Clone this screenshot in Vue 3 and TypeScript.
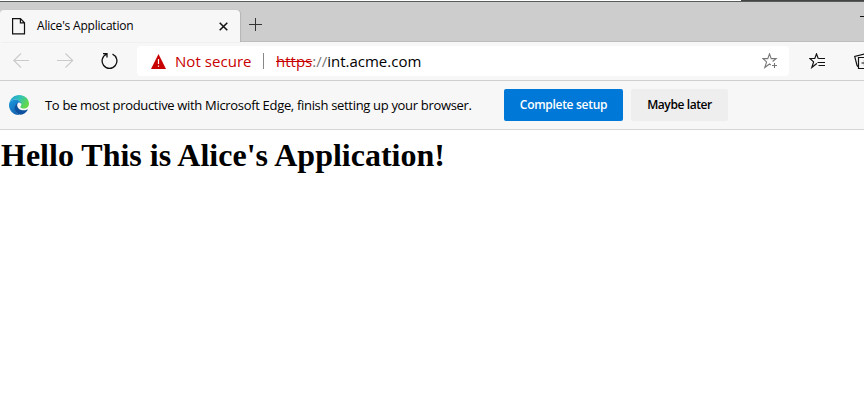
<script setup lang="ts">
interface PageInfo {
  title: string
  scheme: string
  host: string
  heading: string
}

const page: PageInfo = {
  title: "Alice's Application",
  scheme: 'https',
  host: 'int.acme.com',
  heading: "Hello This is Alice's Application!",
}
</script>

<template>
  <div class="browser">
    <header class="tabstrip">
      <div class="tab">
        <svg class="file" width="14" height="17" viewBox="0 0 14 17" fill="none" stroke="#111" stroke-width="1.2">
          <path d="M.6.6h7.8l4.1 4.2v11H.6zM8.400.6v4.200h4.100" />
        </svg>
        <span class="tab-title">{{ page.title }}</span>
        <svg class="close" width="9" height="9" viewBox="0 0 9 9" stroke="#111" stroke-width="1.5">
          <path d="M.7.7l7.6 7.6M8.3.7L.7 8.3" />
        </svg>
      </div>
      <svg class="plus" width="13" height="13" viewBox="0 0 13 13" stroke="#333" stroke-width="1">
        <path d="M6.5 0v13M0 6.5h13" />
      </svg>
      <span class="minimize"></span>
    </header>

    <nav class="toolbar">
      <svg class="back" width="17" height="16" viewBox="0 0 17 16" fill="none" stroke="#cacaca" stroke-width="1.1">
        <path d="M16 7.500H1M8 .500L.8 7.500 8 14.500" />
      </svg>
      <svg class="forward" width="17" height="16" viewBox="0 0 17 16" fill="none" stroke="#cacaca" stroke-width="1.1">
        <path d="M0 7.500h15.500M8.500 .500l7.200 7L8.500 14.500" />
      </svg>
      <svg class="reload" width="17" height="18" viewBox="0 0 17 18" fill="none" stroke="#111" stroke-width="1.3">
        <path d="M11.500 2.200A7.400 7.400 0 1 1 5.500 2.200M2 1.600h4v4" />
      </svg>
      <div class="address">
        <svg class="warning" width="15" height="15" viewBox="0 0 15 15">
          <path d="M7.500 0L15 15H0z" fill="#c80000" />
          <path d="M7.500 5v5M7.500 11.500v1.300" stroke="#fff" stroke-width="1.200" />
        </svg>
        <span class="insecure">Not secure</span>
        <span class="divider"></span>
        <span class="url"><s>{{ page.scheme }}</s><i>://</i>{{ page.host }}</span>
        <svg class="star-add" width="16" height="16" viewBox="0 0 16 16" fill="none" stroke="#777" stroke-width="1.1">
          <path d="M8.800 12l-1.300-1-4.700 3.500 1.800-5.600L.9 5.600h4.900L7.500.9l1.700 4.700h4.900l-3.500 2.900M12.500 10v5M10 12.500h5" />
        </svg>
      </div>
      <svg class="favorites" width="17" height="16" viewBox="0 0 17 16" fill="none" stroke="#111" stroke-width="1.200">
        <path d="M8 11l-.5-.2-4.700 3.700 1.800-5.600L.9 5.500h4.900L7.500.9l1.700 4.600" />
        <path d="M9.200 5.500h6.800M8.500 9.500h7.500M9.500 12.500h6.500" stroke-width="1" />
      </svg>
      <svg class="collections" width="18" height="17" viewBox="0 0 18 17" fill="none" stroke="#111" stroke-width="1.200">
        <path d="M4 13.500l-1-1L.7 3.400 11.500.8l.7 2.700M4.500 4.500h12v11h-12zM10.500 7v6M7.500 10h6" />
      </svg>
    </nav>

    <section class="infobar">
      <svg class="edge" width="20" height="20" viewBox="0 0 20 20">
        <defs>
          <linearGradient id="crest" x1="0" y1="0" x2="1" y2=".5">
            <stop offset="0" stop-color="#2494d8" />
            <stop offset=".5" stop-color="#2fc2b8" />
            <stop offset="1" stop-color="#65d848" />
          </linearGradient>
          <linearGradient id="wave" x1="0" y1="0" x2=".6" y2="1">
            <stop offset="0" stop-color="#1b9ce0" />
            <stop offset="1" stop-color="#1360b0" />
          </linearGradient>
        </defs>
        <path d="M.3 8.500C1.200 3.500 5.200 0 10 0c5.700 0 10 4 10 8.600 0 3-2.200 5-5 5-2.400 0-3.700-.9-3.700-1.600 0-.5 1-1.100 1-2.500C12.300 6.800 9.500 4.500 6 4.500 3.500 4.500 1.400 6 .3 8.500z" fill="url(#crest)" />
        <path d="M0 10c0-3.300 2.700-5.600 6-5.600 3.500 0 6 2.200 6.300 4.600C11.700 8 10.700 7.500 9.500 7.500 7.300 9 6 11 6 13.200c0 3 2 5.500 4.500 6.700C4.500 20.300 0 15.700 0 10z" fill="url(#wave)" />
        <path d="M9.300 7.600C7 8.500 5.700 10.800 5.700 13.200c0 3.500 2.700 6.300 6 6.600 3-.5 5.400-2.200 7-4.800.2-.5-.1-.7-.5-.5-4.700 2.200-10-.1-10-4.500 0-1 .4-1.800 1.100-2.400z" fill="#0c519f" />
      </svg>
      <span class="message">To be most productive with Microsoft Edge, finish setting up your browser.</span>
      <button class="primary"><span>Complete setup</span></button>
      <button class="secondary"><span>Maybe later</span></button>
    </section>

    <main><h1>{{ page.heading }}</h1></main>
  </div>
</template>

<style>
body {
  margin: 0;
  background: #fff;
  overflow: hidden;
}
</style>

<style scoped>
.browser {
  width: 864px;
  height: 416px;
  overflow: hidden;
  font-family: "Open Sans", "Noto Sans", sans-serif;
  color: #000;
  background: #fff;
}
svg, span, button { flex-shrink: 0; }
svg { display: block; }
.tabstrip {
  box-sizing: border-box;
  height: 42px;
  display: flex;
  align-items: flex-start;
  padding-top: 10px;
  background:
    linear-gradient(#444, #444) 741px 0 / 123px 1px no-repeat,
    linear-gradient(#fff, #fff) 0 0 / 741px 1px no-repeat,
    linear-gradient(#555d58, #555d58) 0 1px / 864px 1px no-repeat,
    linear-gradient(#bdbdbd, #bdbdbd) 0 41px / 864px 1px no-repeat,
    #cdcdcd;
}
.tab {
  box-sizing: border-box;
  width: 240px;
  height: 32px;
  padding-left: 12px;
  display: flex;
  align-items: center;
  background: #f7f7f7;
  border-radius: 4px 4px 0 0;
  box-shadow: 1px 0 1px #b5b5b5;
}
.tab-title {
  width: 182px;
  margin-left: 11px;
  font-size: 12px;
  line-height: 20px;
  letter-spacing: -0.2px;
  white-space: nowrap;
}
.plus { margin: 8px 0 0 9px; }
.minimize {
  width: 4px;
  height: 1px;
  margin: 6px 0 0 auto;
  background: #111;
}
.toolbar {
  box-sizing: border-box;
  height: 39px;
  display: flex;
  align-items: center;
  padding-left: 13px;
  background: #f7f7f7;
  border-bottom: 1px solid #cecece;
}
.forward { margin-left: 27px; }
.reload { margin-left: 27px; }
.address {
  box-sizing: border-box;
  width: 652px;
  height: 30px;
  flex-shrink: 0;
  margin-left: 19px;
  padding: 0 11px 0 14px;
  display: flex;
  align-items: center;
  background: #fff;
  border-radius: 4px;
  font-size: 15px;
  line-height: 22px;
  white-space: nowrap;
}
.insecure {
  width: 77px;
  margin-left: 9px;
  color: #c80000;
  letter-spacing: 0.05px;
}
.divider {
  width: 1px;
  height: 16px;
  margin-left: 11px;
  background: #888;
}
.url {
  margin-left: 12px;
  letter-spacing: 0;
}
.url s { color: #c80000; }
.url i { font-style: normal; color: #777; }
.star-add { margin-left: auto; }
.favorites { margin-left: 20px; }
.collections { margin-left: 28px; }
.infobar {
  box-sizing: border-box;
  height: 49px;
  display: flex;
  align-items: center;
  padding-left: 9px;
  background: #f7f7f7;
  border-bottom: 1px solid #d5d5d5;
}
.message {
  width: 459px;
  margin-left: 16px;
  font-size: 13px;
  line-height: 20px;
  letter-spacing: -0.32px;
  white-space: nowrap;
}
button {
  height: 32px;
  padding: 0;
  border: 0;
  border-radius: 2px;
  font-family: inherit;
  font-size: 12px;
  line-height: 18px;
  font-weight: 600;
  white-space: nowrap;
}
.primary {
  width: 119px;
  color: #fff;
  background: #0078d7;
  letter-spacing: -0.3px;
}
.secondary {
  width: 97px;
  margin-left: 8px;
  color: #000;
  background: #eee;
  letter-spacing: -0.4px;
}
h1 {
  margin: 7px 0 0 1px;
  font: bold 32px/37px "Liberation Serif", serif;
  white-space: nowrap;
}
</style>
